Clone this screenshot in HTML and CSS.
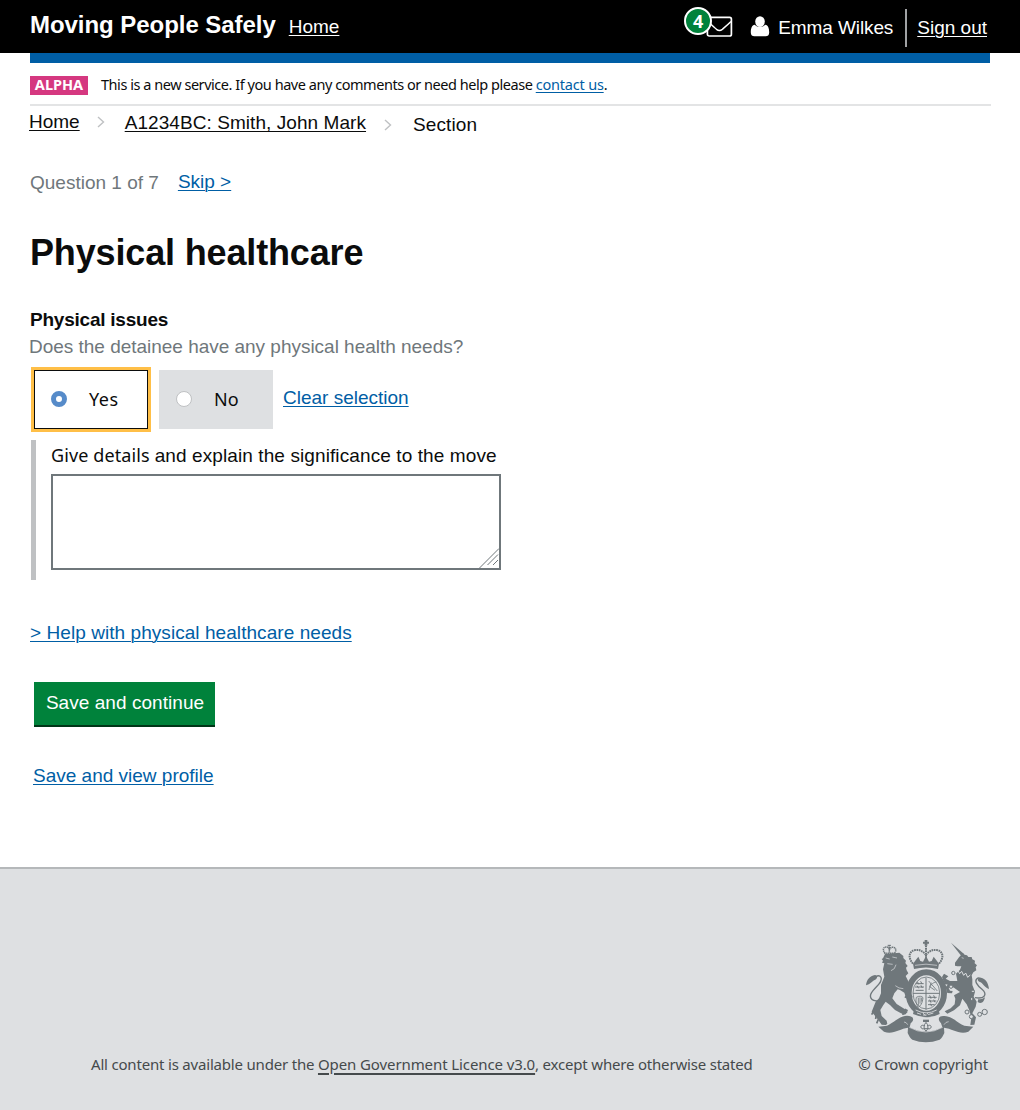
FILE: index.html
```html
<!DOCTYPE html>
<html lang="en">
<head>
<meta charset="utf-8">
<title>Moving People Safely</title>
<link rel="stylesheet" href="styles.css">
</head>
<body>
<header class="topbar">
  <span class="brand">Moving People Safely</span>
  <a class="home-link" href="#">Home</a>
  <div class="account">
    <a class="messages" href="#" aria-label="Messages">
      <svg class="envelope" width="27" height="22" viewBox="0 0 27 22"><g fill="none" stroke="#fff" stroke-width="1.7"><rect x="1.4" y="1.4" width="24" height="18.6" rx="1.8"/><path d="M2 5.5C5 8.500 8 11 10.5 13.3Q13.4 15.5 16.3 13.3C19 11 22 8.500 25 5.500" stroke-width="1.5"/></g></svg>
      <span class="badge">4</span>
    </a>
    <svg class="person" width="20" height="22" viewBox="0 0 20 22"><g fill="#fff"><ellipse cx="10" cy="5.600" rx="4.800" ry="5.400"/><path d="M4.800 8.800C1.800 9.200.8 12.600.8 16.400c0 2.600 1.500 3.800 3.600 3.800h11.200c2.100 0 3.600-1.200 3.600-3.800 0-3.800-1-7.200-4-7.600-2.600 3-7.800 3-10.400 0Z"/></g></svg>
    <span class="user">Emma Wilkes</span>
    <span class="divider"></span>
    <a class="signout" href="#">Sign out</a>
  </div>
</header>
<main class="page">
  <div class="bar"></div>
  <div class="phase">
    <strong class="tag">ALPHA</strong>
    <span class="phase-text">This is a new service. If you have any comments or need help please <a href="#">contact us</a>.</span>
  </div>
  <nav class="crumbs">
    <a class="crumb-home" href="#">Home</a>
    <svg class="chev" width="8" height="12" viewBox="0 0 8 12"><path d="M1 1l5.500 5L1 11" fill="none" stroke="#bfc1c3" stroke-width="1.4"/></svg>
    <a class="crumb-person" href="#">A1234BC: Smith, John Mark</a>
    <svg class="chev chev-last" width="8" height="12" viewBox="0 0 8 12"><path d="M1 1l5.500 5L1 11" fill="none" stroke="#bfc1c3" stroke-width="1.4"/></svg>
    <span class="crumb-section">Section</span>
  </nav>
  <div class="progress"><span class="count">Question 1 of 7</span><a class="skip" href="#">Skip &gt;</a></div>
  <h1 class="title">Physical healthcare</h1>
  <h2 class="subtitle">Physical issues</h2>
  <p class="hint">Does the detainee have any physical health needs?</p>
  <div class="choices">
    <label class="choice selected"><span class="radio on"></span><span class="option">Yes</span></label>
    <label class="choice"><span class="radio"></span><span class="option">No</span></label>
    <a class="clear" href="#">Clear selection</a>
  </div>
  <section class="details">
    <p class="details-label"><span class="lead">Give details</span> <span class="rest">and explain the significance to the move</span></p>
    <div class="textbox"><svg width="20" height="20" viewBox="0 0 20 20"><path d="M.5 20L20 .5M8.500 17L19 6.500M14 17l5-5" fill="none" stroke="#6f777b" stroke-width="1"/></svg></div>
  </section>
  <a class="help" href="#">&gt; Help with physical healthcare needs</a>
  <button class="save" type="button">Save and continue</button>
  <a class="profile" href="#">Save and view profile</a>
</main>
<footer class="footer">
  <p class="licence">All content is available under the <a href="#">Open Government Licence v3.0</a>, except where otherwise stated</p>
  <div class="crown">
    <svg class="crest" width="125" height="105" viewBox="30 27 375 315" fill="#6f777b">
      <!-- crown -->
      <path d="M209 30h8v5h5v6h-5v6h-8v-6h-5v-6h5Z"/>
      <path d="M174 101C158 83 161 63 181 60c14-2 24 5 31 14M252 101c16-18 13-38-7-41-14-2-24 5-32 14M213 47v55" fill="none" stroke="#6f777b" stroke-width="6" stroke-dasharray="5 2"/>
      <path d="M174 101l9-12 7-9 6 13 8 2 9-17 9 17 8-2 6-13 7 9 9 12-3 16q-36-9-72 0Z"/>
      <path d="M180 106q33-7 66 0" fill="none" stroke="#dee0e2" stroke-width="2"/>
      <!-- garter and shield -->
      <ellipse cx="214" cy="189" rx="53" ry="62" fill="none" stroke="#6f777b" stroke-width="18"/>
      <ellipse cx="214" cy="189" rx="40" ry="48" fill="none" stroke="#6f777b" stroke-width="2.500"/>
      <path d="M213 143v96M174 190h80" fill="none" stroke="#6f777b" stroke-width="3"/>
      <path d="M182 161h24M180 171h27M182 181h24M187 155l4 8m6-9 4 8m-15 5 5 8m7-9 4 8M218 202h27M219 213h25M219 224h20M224 196l4 10m8-10 4 10m-16 3 4 9m8-9 4 8m-14 4 4 8" fill="none" stroke="#6f777b" stroke-width="3"/>
      <path d="M221 153l26 30M222 180c2-12 10-23 22-24M229 158l-5 12 16 11M184 202c8-5 17-4 20 1-2 17-7 25-15 29-5-10-8-19-5-30Zm6 1v22m5-23v19m5-18v12" fill="none" stroke="#6f777b" stroke-width="2.500"/>
      <path d="M178 236q36 22 72 0l4 16q-36 20-80 0Z"/>
      <path d="M182 240q32 17 63 0M186 249l12 4m6 2h11m7-2 13-4M204 249l7 8m5-9 5 7" stroke="#dee0e2" stroke-width="2.500" fill="none"/>
      <!-- motto ribbon -->
      <path d="M70 290l26-3c23-10 36-29 60-30 20 0 24 12 11 23l-3 12c31 17 67 17 98 0l-4-12c-12-12-7-24 10-22 26 1 37 20 60 29l27 3-15 15c-27 10-47-9-73-12l1 16c-4 9-8 16-14 20-28 10-55 10-82 0-6-4-10-11-14-20l1-16c-25 3-45 22-72 12Z"/>
      <path d="M163 292q49 28 100 0M267 284q5-9 14-9M158 284q-4-8-11-8" fill="none" stroke="#dee0e2" stroke-width="2"/>
      <path d="M204 269h18v7h-18z"/>
      <path d="M213 277q-12 14 0 27 12-13 0-27ZM210 288c-14-8-17 8-5 9M216 288c14-8 17 8 5 9M205 296h17" fill="none" stroke="#6f777b" stroke-width="3"/>
      <!-- lion -->
      <path d="M90 70C82 60 84 51 94 51c6 0 8 3 9 8 3-5 6-8 12-7 9 2 9 11 4 17M103 45v24M88 70h33" fill="none" stroke="#6f777b" stroke-width="4.500" stroke-dasharray="4 1.500"/>
      <path d="M98 46h10" stroke="#6f777b" stroke-width="3"/>
      <path d="M84 85l6-13 43-4 12 10 0 6 8 8-2 7 7 9-5 5 2 8 5 9-8 8 6 12 7 15-2 15 7 25-10 5-8-10-4-12-13-8-7-2-10 12-6 15 13 17 25 16 8 8-8 8-12-4-18-10-15-15-13-10-7 10-9 15 4 18 15 14 2 10-5 3-12-1-10-14-12-15-8-10 12-30 10-10 6-15v-25l10-25-4-22 4-18-7-2 3-6-4-5Z"/>
      <path d="M92 84l12 3M112 81l14 3M97 101l16 2M123 104q-3 15-15 18M121 167q10 9 24 9" fill="none" stroke="#dee0e2" stroke-width="2"/>
      <path d="M71 213c-24 0-32-13-17-31 14-17 30-28 24-40-6-9-17-4-22 7" fill="none" stroke="#6f777b" stroke-width="4"/>
      <path d="M33 166c2-17 11-28 27-31 9 1 8 11-1 15-8 4-13 13-26 16Z"/>
      <path d="M55 244l-5 10M63 258l-1 9M70 268l-5 12M149 238l9 4M145 246l-1 9M157 194l-7 9M168 195l3 8" stroke="#6f777b" stroke-width="5"/>
      <!-- unicorn -->
      <path d="M288 38l39 34-8 6Z"/>
      <path d="M300 98l12-16 7-8 3-6 7 6 7 2 4 5 10 0 2 7 8 4-1 8 7 6-4 6 2 9-9 6-5 9 2 12v17l8 20-4 15 9 15-3 15-10 20 11 12-5 22-12 1 3-22-6-22-8-18-13-17-7 20-18 15-20 10-8-7 18-9 12-12 2-17-4-10 18-10-18-13-15-7-13-5-8-20 6-10 13 8-8 7 13 7 22 0-4-22 12-12 4-10-12 0-7-2Z"/>
      <path d="M295 164l-14 10 4 8 8 1-2 7-14-1-5-18 11-12Z"/>
      <path d="M308 121l6 10 6-7 6 12 6-7 6 13 8-7" fill="none" stroke="#dee0e2" stroke-width="3"/>
      <path d="M320 83l6 2" fill="none" stroke="#dee0e2" stroke-width="2"/>
      <path d="M360 203c31 5 37-11 21-25-17-14-22-25-16-31 7-7 16 0 20 8" fill="none" stroke="#6f777b" stroke-width="4"/>
      <path d="M402 177c-2-20-11-31-24-34-11 0-13 9-3 13 9 3 12 15 27 21ZM368 216c12 9 20-3 22-14-7 5-14 7-20 5Z"/>
      <g fill="#dee0e2" stroke="#6f777b" stroke-width="3"><circle cx="295" cy="129" r="5"/><circle cx="288" cy="170" r="5"/><circle cx="354" cy="184" r="4"/><circle cx="350" cy="207" r="4"/><circle cx="336" cy="246" r="6"/><circle cx="349" cy="260" r="6"/><circle cx="374" cy="253" r="6"/><circle cx="389" cy="246" r="8"/></g>
    </svg>
    <span class="copyright">© Crown copyright</span>
  </div>
</footer>
</body>
</html>
```
FILE: styles.css
```css
* { box-sizing: border-box; }
body { margin: 0; background: #fff; color: #0b0c0c; font: 19px/20px "Liberation Sans", Arial, sans-serif; }
a { color: #005ea5; text-decoration: underline; text-decoration-thickness: 1px; text-underline-offset: 2px; }
p, h1, h2 { margin: 0; }
svg { display: block; flex: none; }
a, span, label, button, h1, h2, p { white-space: nowrap; }

.topbar { display: flex; align-items: flex-start; height: 53px; padding: 0 32px 0 30px; background: #000; color: #fff; }
.topbar a { color: #fff; }
.brand { margin-top: 11px; font-size: 24px; font-weight: bold; line-height: 28px; letter-spacing: -.05px; }
.home-link { margin: 17px 0 0 13px; }
.account { display: flex; align-items: flex-start; margin-left: auto; }
.messages { position: relative; padding-top: 16px; }
.badge { position: absolute; left: -22px; top: 7px; width: 28px; height: 28px; border: 2px solid #fff; border-radius: 50%; background: #00823b; font: bold 18px/24px "Noto Sans", sans-serif; text-align: center; }
.person { margin: 16px 0 0 17px; }
.user { margin: 18px 0 0 8px; letter-spacing: -.1px; }
.divider { width: 2px; height: 38px; margin: 9px 10px 0 12px; background: #a0a2a4; }
.signout { margin: 18px 1px 0 0; }

.page { height: 814px; padding: 0 29px 0 30px; display: flex; flex-direction: column; align-items: flex-start; }
.bar { align-self: stretch; height: 10px; margin-right: 1px; background: #005ea5; }
.phase { display: flex; align-items: center; align-self: stretch; height: 43px; border-bottom: 2px solid #e3e4e5; padding-top: 3px; }
.tag { width: 58px; height: 19px; background: #d53880; color: #fff; font: bold 14.500px/17px "Noto Sans", sans-serif; text-align: center; }
.phase-text { margin: -2px 0 0 13px; font: 14.500px/20px "Noto Sans", sans-serif; letter-spacing: -.46px; }
.phase-text a { letter-spacing: -.2px; }
.crumbs { display: flex; align-items: flex-start; margin: 6px 0 0 -1px; }
.crumbs a { color: #0b0c0c; }
.chev { margin: 4px 0 0 17px; }
.crumb-person { margin: 1px 0 0 20px; letter-spacing: .065px; }
.chev-last { margin-top: 7px; margin-left: 18px; }
.crumb-section { margin: 3px 0 0 21px; letter-spacing: .1px; }
.progress { display: flex; margin-top: 37px; color: #6f777b; }
.count { margin-top: 1px; }
.skip { margin-left: 19px; }
.title { margin-top: 40px; font-size: 36px; line-height: 40px; letter-spacing: -.15px; }
.subtitle { margin-top: 37px; font-size: 19px; line-height: 20px; letter-spacing: -.23px; }
.hint { margin: 7px 0 0 -1px; color: #6f777b; letter-spacing: -.02px; }
.choices { display: flex; margin: 10px 0 0 1px; }
.choice { display: flex; align-items: center; width: 114px; height: 59px; margin: 3px 0; padding: 0 0 2px 17px; background: #dee0e2; font: 18px/24px "Noto Sans", sans-serif; }
.selected { width: 120px; height: 65px; margin: 0 8px 0 0; border: 3px solid #ffbf47; outline: 1px solid #0b0c0c; outline-offset: -4px; background: #fff; }
.selected .option { letter-spacing: .5px; }
.radio { width: 16px; height: 16px; margin-right: 22px; border: 1px solid #bfc1c3; border-radius: 50%; background: #fff; }
.on { border: 5px solid #568bc9; }
.clear { margin: 21px 0 0 10px; }
.details { height: 140px; margin: 8px 0 0 1px; padding: 5px 0 0 15px; border-left: 5px solid #bfc1c3; }
.details-label { height: 20px; display: flex; align-items: baseline; gap: 5px; }
.lead { font: 18px/20px "Noto Sans", sans-serif; letter-spacing: .1px; }
.rest { letter-spacing: .1px; }
.textbox { display: flex; align-items: flex-end; justify-content: flex-end; width: 450px; height: 96px; margin-top: 9px; border: 2px solid #6f777b; }
.help { margin-top: 43px; letter-spacing: .06px; }
.save { width: 181px; height: 45px; margin: 39px 0 0 4px; padding: 0 0 1px 1px; border: 0; border-bottom: 2px solid #003618; background: #00823b; color: #fff; font: 19px/20px "Liberation Sans", Arial, sans-serif; letter-spacing: .05px; }
.profile { margin: 39px 0 0 3px; }

.footer { display: flex; justify-content: space-between; align-items: flex-end; height: 243px; padding: 0 32px 35px 91px; border-top: 2px solid #b5b8ba; background: #dee0e2; color: #454a4c; font: 15px/22px "Noto Sans", sans-serif; }
.footer a { color: inherit; text-decoration-thickness: 2px; text-underline-offset: 3px; letter-spacing: -.1px; }
.licence { letter-spacing: -.19px; }
.copyright { letter-spacing: -.15px; }
.crest { margin-right: -2px; }
.crown { display: flex; flex-direction: column; align-items: flex-end; gap: 9px; }
```
